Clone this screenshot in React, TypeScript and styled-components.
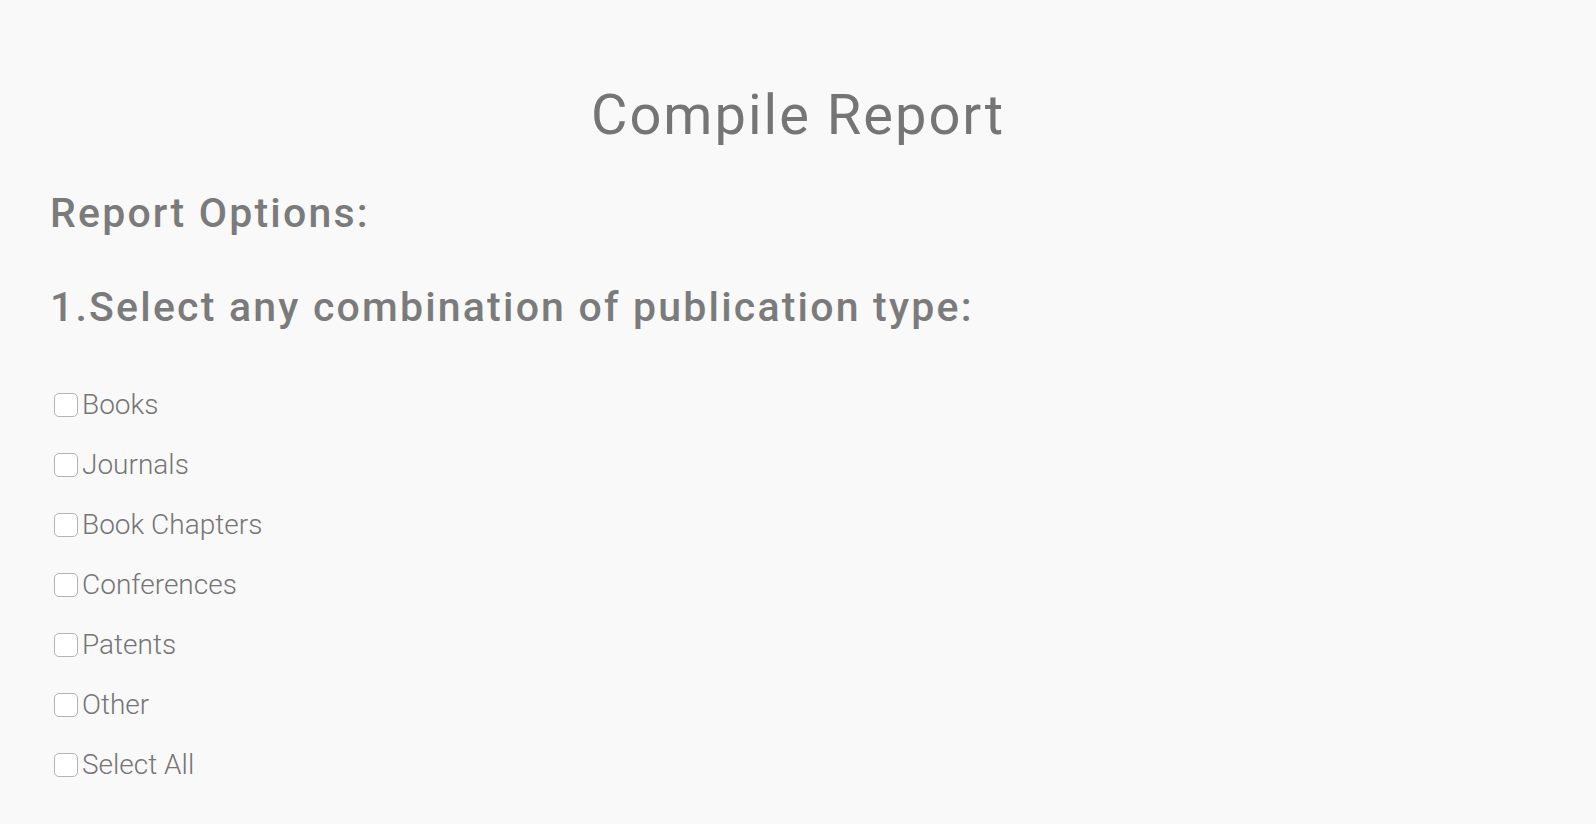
import React from "react";
import styled, { createGlobalStyle } from "styled-components";

const GlobalStyle = createGlobalStyle`
  html, body {
    margin: 0;
    padding: 0;
    background: #f9f9f9;
  }
  body {
    font-family: Roboto, "Noto Sans", sans-serif;
    color: #757575;
  }
`;

const Page = styled.main`
  padding: 83px 50px 20px 50px;
  min-height: 824px;
  box-sizing: border-box;
`;

const Title = styled.h1`
  margin: 0;
  text-align: center;
  font-size: 56px;
  font-weight: 400;
  letter-spacing: 2px;
  line-height: 64px;
`;

const Heading = styled.h2`
  margin: 0;
  font-size: 41px;
  font-weight: 500;
  letter-spacing: 2.2px;
  line-height: 50px;
  color: #7b7b7b;
`;

const Section = styled.section`
  display: flex;
  flex-direction: column;
  gap: 44px;
  margin-top: 41px;
`;

const OptionList = styled.div`
  display: flex;
  flex-direction: column;
  gap: 28px;
  margin-top: 13px;
`;

const Option = styled.label`
  display: flex;
  align-items: center;
  gap: 4px;
  font-size: 28px;
  font-weight: 300;
  line-height: 32px;
`;

const Box = styled.input`
  appearance: none;
  width: 24px;
  height: 24px;
  margin: 0 0 0 4px;
  border: 1.5px solid #b4b4b4;
  border-radius: 5px;
  background: #ffffff;
  box-sizing: border-box;
`;

const options = [
  "Books",
  "Journals",
  "Book Chapters",
  "Conferences",
  "Patents",
  "Other",
  "Select All",
];

export default function App() {
  return (
    <>
      <GlobalStyle />
      <Page>
        <Title>Compile Report</Title>
        <Section>
          <Heading>Report Options:</Heading>
          <Heading>1.Select any combination of publication type:</Heading>
          <OptionList>
            {options.map((o) => (
              <Option key={o}>
                <Box type="checkbox" />
                {o}
              </Option>
            ))}
          </OptionList>
        </Section>
      </Page>
    </>
  );
}
